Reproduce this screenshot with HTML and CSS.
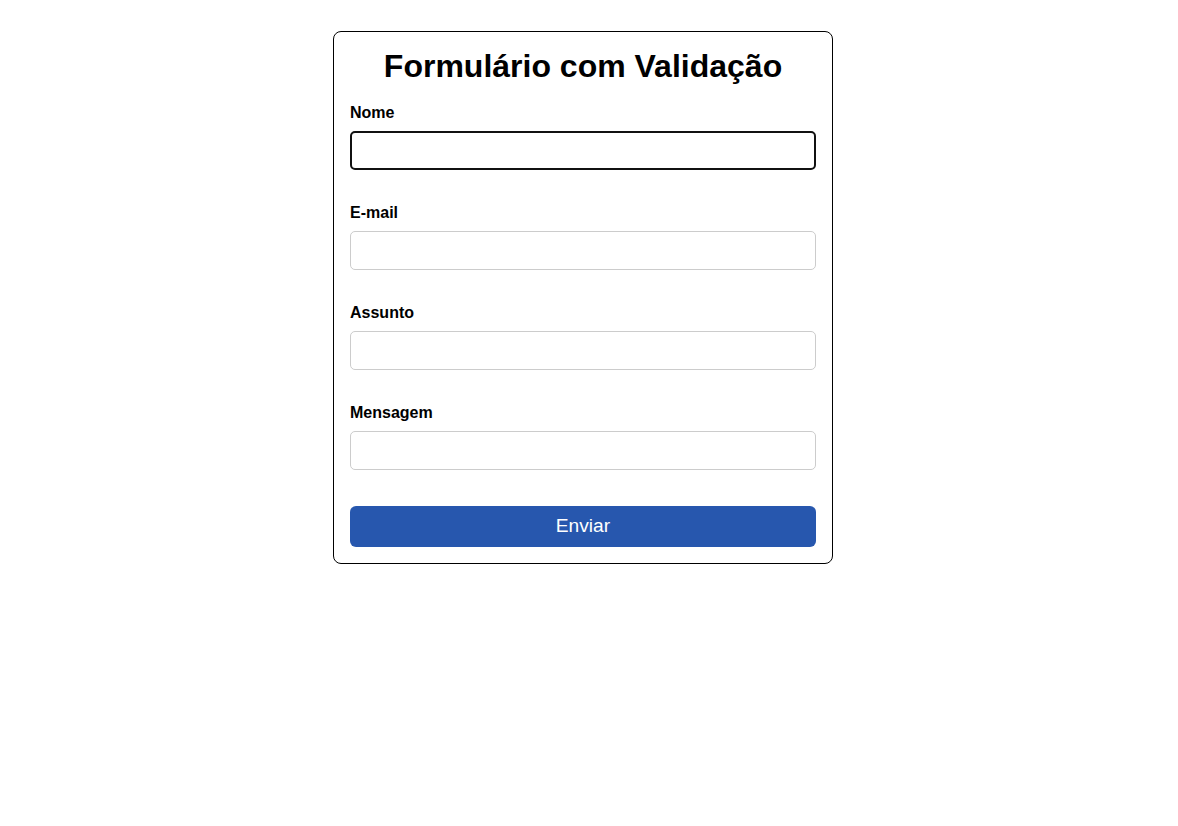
FILE: index.html
```html
<!DOCTYPE html>
<html lang="pt-BR">
<head>
<meta charset="utf-8">
<title>Formulário com Validação</title>
<link rel="stylesheet" href="styles.css">
</head>
<body>
<div class="page">
  <form class="card">
    <h1 class="title">Formulário com Validação</h1>
    <div class="group">
      <label class="label" for="nome">Nome</label>
      <input class="input input-focused" id="nome" type="text">
    </div>
    <div class="group">
      <label class="label" for="email">E-mail</label>
      <input class="input" id="email" type="text">
    </div>
    <div class="group">
      <label class="label" for="assunto">Assunto</label>
      <input class="input" id="assunto" type="text">
    </div>
    <div class="group group-last">
      <label class="label" for="mensagem">Mensagem</label>
      <input class="input" id="mensagem" type="text">
    </div>
    <button class="button" type="button">Enviar</button>
  </form>
</div>
</body>
</html>
```
FILE: styles.css
```css
html, body {
  margin: 0;
  padding: 0;
  background: #fff;
}
body {
  font-family: "Liberation Sans", Arial, sans-serif;
  color: #000;
}
.page {
  display: flex;
  justify-content: center;
  padding: 31px 12px 0 0;
}
.card {
  box-sizing: border-box;
  width: 500px;
  border: 1px solid #000;
  border-radius: 8px;
  padding: 16px;
  display: flex;
  flex-direction: column;
}
.title {
  margin: 0 0 18px;
  font-size: 32px;
  line-height: 37px;
  font-weight: bold;
  text-align: center;
}
.group {
  display: flex;
  flex-direction: column;
  margin-bottom: 33px;
}
.group-last {
  margin-bottom: 36px;
}
.label {
  font-size: 16px;
  line-height: 18px;
  font-weight: bold;
  padding-top: 1px;
  margin-bottom: 9px;
}
.input {
  box-sizing: border-box;
  height: 39px;
  width: 100%;
  border: 1px solid #ccc;
  border-radius: 5px;
  padding: 0 10px;
  font-family: inherit;
  font-size: 16px;
  outline: none;
  background: #fff;
}
.input-focused {
  border: 2px solid #111;
}
.button {
  height: 41px;
  border: none;
  border-radius: 6px;
  background: #2757ae;
  color: #fff;
  font-family: inherit;
  font-size: 19.2px;
  padding: 0 0 2px;
  cursor: pointer;
}
```
